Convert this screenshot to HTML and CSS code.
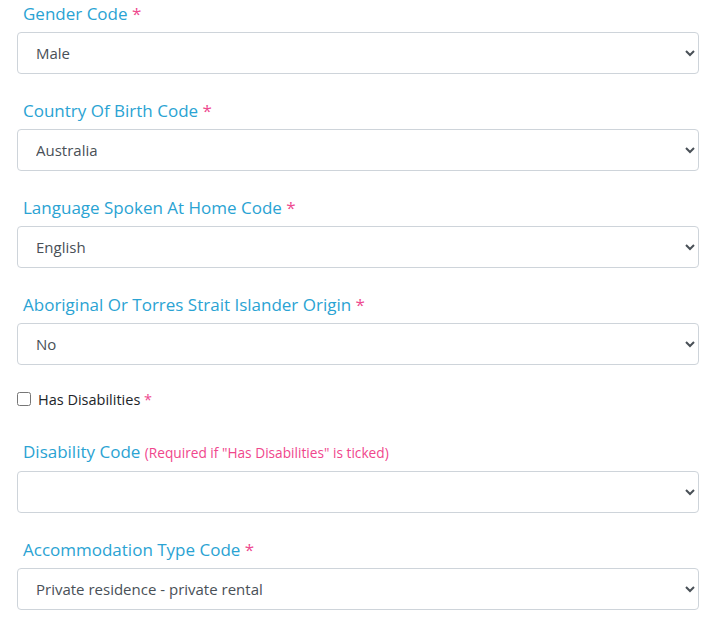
FILE: index.html
```html
<!DOCTYPE html>
<html>
<head>
<meta charset="utf-8">
<link rel="stylesheet" href="styles.css">
</head>
<body>
  <form class="form">
    <div class="form__group">
      <label class="form__label">Gender Code <span class="form__req">*</span></label>
      <select class="form__control">
        <option>Male</option>
        <option>Female</option>
      </select>
    </div>
    <div class="form__group">
      <label class="form__label">Country Of Birth Code <span class="form__req">*</span></label>
      <select class="form__control">
        <option>Australia</option>
      </select>
    </div>
    <div class="form__group">
      <label class="form__label">Language Spoken At Home Code <span class="form__req">*</span></label>
      <select class="form__control">
        <option>English</option>
      </select>
    </div>
    <div class="form__group">
      <label class="form__label">Aboriginal Or Torres Strait Islander Origin <span class="form__req">*</span></label>
      <select class="form__control">
        <option>No</option>
        <option>Yes</option>
      </select>
    </div>
    <div class="form__check">
      <input type="checkbox" class="form__checkbox" id="has-disabilities">
      <label class="form__check-label" for="has-disabilities">Has Disabilities <span class="form__req">*</span></label>
    </div>
    <div class="form__group">
      <label class="form__label">Disability Code <span class="form__hint">(Required if "Has Disabilities" is ticked)</span></label>
      <select class="form__control">
        <option></option>
      </select>
    </div>
    <div class="form__group">
      <label class="form__label">Accommodation Type Code <span class="form__req">*</span></label>
      <select class="form__control">
        <option>Private residence - private rental</option>
      </select>
    </div>
  </form>
</body>
</html>
```
FILE: styles.css
```css
body {
    margin: 0;
    background: #fff;
    font-family: "Open Sans", "Noto Sans", sans-serif;
}
.form {
    padding: 0 20px 0 17px;
}
.form__group {
    margin-bottom: 23px;
}
.form__label {
    display: block;
    padding-left: 6px;
    font-size: 17px;
    line-height: 28px;
    color: #2aa3d3;
}
.form__req {
    color: #ee4a8f;
}
.form__hint {
    font-size: 13.7px;
    color: #f0468c;
}
.form__control {
    display: block;
    width: 100%;
    height: 42px;
    margin-top: 4px;
    padding: 0 14px;
    border: 1px solid #ced4da;
    border-radius: 4px;
    background: #fff;
    font-family: inherit;
    font-size: 15px;
    color: #495057;
}
.form__check {
    display: flex;
    align-items: center;
    height: 22px;
    margin-bottom: 28px;
}
.form__checkbox {
    width: 14px;
    height: 14px;
    margin: 0 7px 0 0;
}
.form__check-label {
    font-size: 14.5px;
    color: #212529;
}
```
